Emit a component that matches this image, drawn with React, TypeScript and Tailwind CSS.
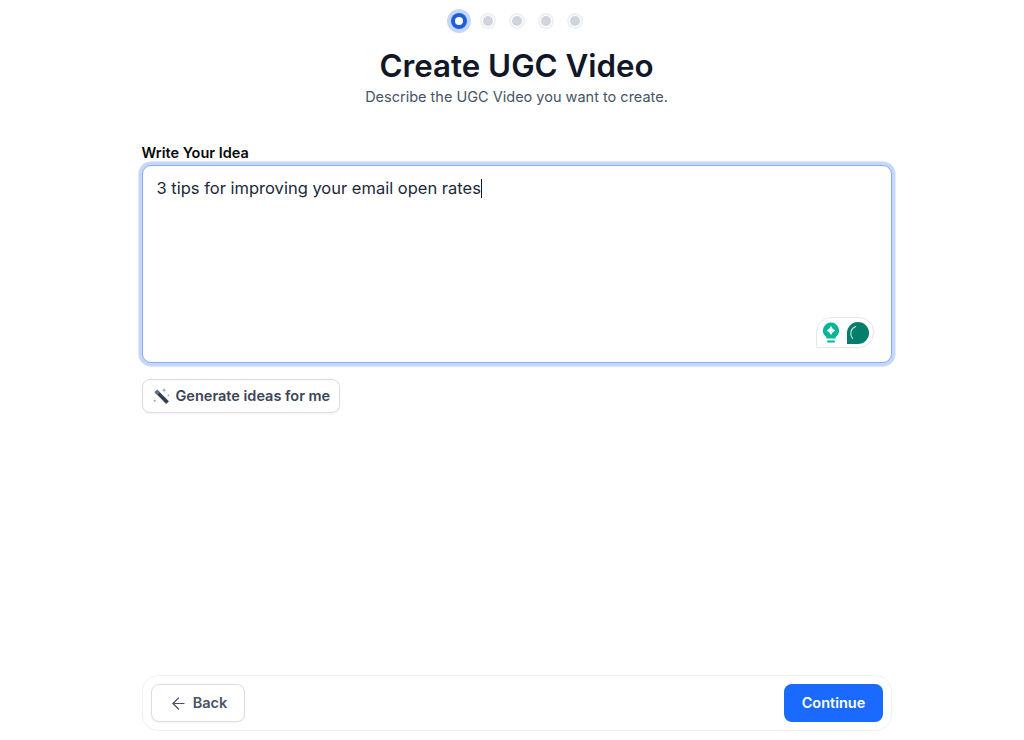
import React from "react";
import { ArrowLeft } from "lucide-react";

function Dot({ active }: { active?: boolean }) {
  if (active) {
    return (
      <div className="w-6 h-6 -mr-1 rounded-full bg-[#c5d7fb] flex items-center justify-center">
        <div className="w-4 h-4 rounded-full bg-[#1d5fe0] flex items-center justify-center">
          <div className="w-2 h-2 rounded-full bg-white" />
        </div>
      </div>
    );
  }
  return (
    <div className="w-4 h-4 rounded-full bg-white border-2 border-[#eef0f4] flex items-center justify-center">
      <div className="w-2.5 h-2.5 rounded-full bg-[#d0d5dd]" />
    </div>
  );
}

export default function App() {
  return (
    <div className="w-[1024px] h-[740px] bg-white flex flex-col items-center overflow-hidden pl-[9px] font-['Inter',sans-serif]">
      <div className="flex items-center gap-[13px] mt-[9px] mr-[4px] h-6">
        <Dot active />
        <Dot />
        <Dot />
        <Dot />
        <Dot />
      </div>
      <h1 className="mt-[15px] text-[31.3px] leading-[36px] font-semibold text-[#101828]">Create UGC Video</h1>
      <p className="mt-[3px] text-[14.5px] leading-[20px] text-[#475467]">Describe the UGC Video you want to create.</p>
      <div className="w-[750px] mt-[36px]">
        <div className="text-[14.5px] leading-[20px] font-semibold text-[#0a0a0a]">Write Your Idea</div>
        <div className="relative mt-[2px] h-[198px] rounded-[9px] bg-white border border-[#84adf5] shadow-[0_0_0_3.5px_#c5d7fb] px-[14px] py-[10px] text-[16.5px] leading-[24px] text-[#1d2939]">
          <span>3 tips for improving your email open rates</span>
          <span className="inline-block w-px h-[19px] bg-[#101828] align-[-4px]" />
          <div className="absolute left-[673px] top-[151px] w-[58px] h-[31px] rounded-[15px] rounded-bl-none bg-white border border-[#e4e7ec] flex items-center pl-[5px] gap-[7px]">
            <svg width="18" height="24" viewBox="0 0 18 24">
              <path d="M9 1.5a8 8 0 0 0-4.6 14.5V17.5h9.2v-1.5A8 8 0 0 0 9 1.5z" fill="#06b696" />
              <path d="M9 6l1.2 2.3 2.3 1.2-2.3 1.2L9 13l-1.2-2.3L5.5 9.5l2.3-1.2z" fill="#fff" stroke="#fff" strokeWidth="1.4" strokeLinejoin="round" />
              <rect x="5" y="19.5" width="8" height="2" rx="1" fill="#06b696" />
            </svg>
            <svg width="22" height="22" viewBox="0 0 24 24">
              <path d="M12 0a12 12 0 1 1 0 24H0V12A12 12 0 0 1 12 0z" fill="#047e6c" />
              <path d="M6 18C2.5 13 4 7 9.5 5" stroke="#c9e8e1" strokeWidth="1.2" fill="none" strokeLinecap="round" />
            </svg>
          </div>
        </div>
        <button className="mt-4 h-[34px] w-[198px] flex items-center gap-[5px] pl-[9px] rounded-lg bg-white border border-[#d9dde5] text-[14.5px] font-semibold text-[#3b4558] shadow-[0_1px_2px_rgba(16,24,40,0.05)]">
          <svg width="19" height="19" viewBox="0 0 18 18">
            <path d="M2.5 5L5 2.5 16 13.5 13.5 16z" fill="#344054" />
            <path d="M2.5 5L5 2.5 7.5 5 5 7.5z" fill="#667085" />
            <path d="M11.5 1l.6 1.4 1.4.6-1.4.6-.6 1.4-.6-1.4L9.5 3l1.4-.6z" fill="#98a2b3" />
            <circle cx="2.5" cy="13" r="1" fill="#98a2b3" />
            <circle cx="15.5" cy="8" r="0.8" fill="#98a2b3" />
          </svg>
          <span>Generate ideas for me</span>
        </button>
      </div>
      <div className="flex-1" />
      <div className="w-[750px] ml-[1px] h-[56px] mb-[9px] rounded-2xl border border-[#f0f1f4] bg-white flex items-center justify-between px-[8px]">
        <button className="w-[94px] h-[38px] rounded-lg bg-white border border-[#d9dde5] flex items-center justify-center gap-[5px] text-[14.5px] font-semibold text-[#475467] shadow-[0_1px_2px_rgba(16,24,40,0.05)]">
          <ArrowLeft size={19} strokeWidth={1.5} />
          <span>Back</span>
        </button>
        <button className="w-[99px] h-[38px] rounded-lg bg-[#1a6aff] text-white text-[14.5px] font-semibold">Continue</button>
      </div>
    </div>
  );
}
